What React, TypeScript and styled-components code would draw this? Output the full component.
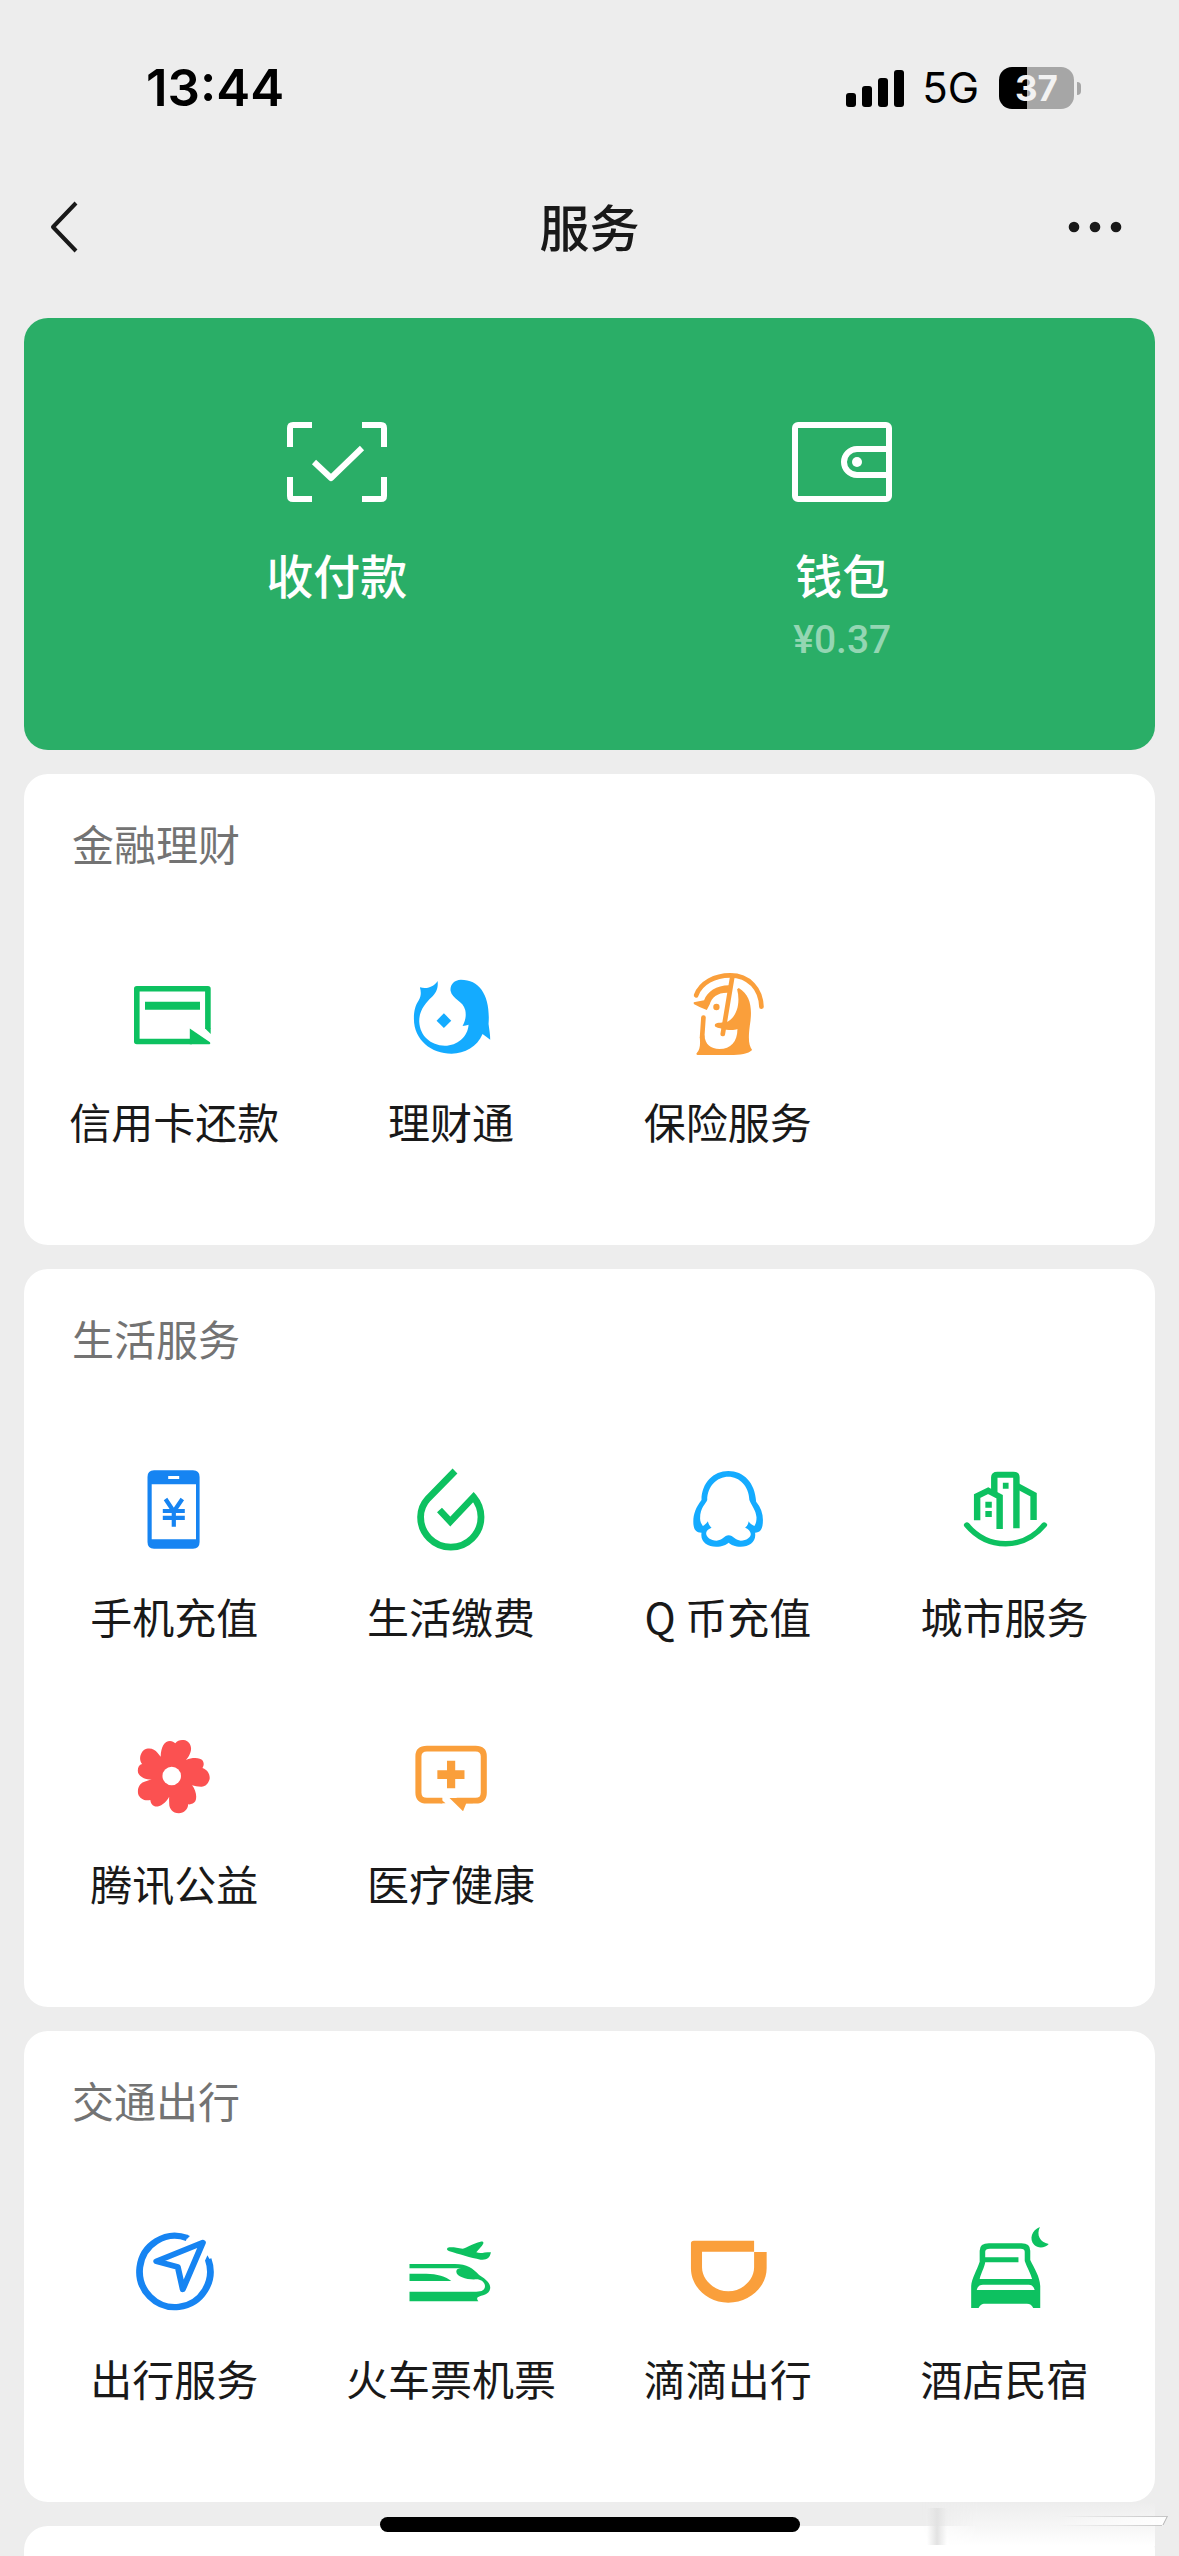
import React from "react";
import styled, { createGlobalStyle } from "styled-components";

const GlobalStyle = createGlobalStyle`
  * { box-sizing: border-box; }
  body {
    margin: 0;
    background: #ededed;
    color: #191919;
    font-family: "Noto Sans CJK SC", "Noto Sans", sans-serif;
  }
  button {
    margin: 0;
    padding: 0;
    border: 0;
    background: none;
    color: inherit;
    font: inherit;
    cursor: pointer;
  }
  h1, h2 { margin: 0; font-weight: 400; }
`;

const GREEN = "#0dc160";
const BLUE = "#1684f2";
const SKY = "#14abff";
const ORANGE = "#fa9f3b";
const RED = "#fb5151";

const Page = styled.div`
  position: relative;
  display: flex;
  flex-direction: column;
  height: 100vh;
  overflow: hidden;
`;

const StatusBar = styled.div`
  flex: none;
  display: flex;
  align-items: center;
  justify-content: space-between;
  height: 162px;
  padding: 14px 98px 0 146px;
  color: #000;
  font-family: Inter, sans-serif;
`;

const Clock = styled.time`
  font-size: 51px;
  line-height: 60px;
  font-weight: 600;
`;

const StatusGroup = styled.div`
  display: flex;
  align-items: center;
`;

const Network = styled.span`
  margin: 0 20px 0 18px;
  font-size: 42px;
  line-height: 48px;
`;

const Battery = styled.div`
  display: flex;
  align-items: center;
  gap: 3px;
`;

const BatteryBody = styled.div<{ $level: number }>`
  width: 75px;
  height: 42px;
  border-radius: 13px;
  background: linear-gradient(to right, #000 ${(p) => p.$level}%, #a6a6a6 ${(p) => p.$level}%);
  color: #f2f2f2;
  font-size: 35px;
  line-height: 42px;
  font-weight: 700;
  text-align: center;
`;

const BatteryTip = styled.div`
  width: 4px;
  height: 13px;
  border-radius: 0 4px 4px 0;
  background: #a6a6a6;
`;

const NavBar = styled.header`
  flex: none;
  display: grid;
  grid-template-columns: 1fr auto 1fr;
  align-items: center;
  height: 132px;
  padding: 0 48px 2px;
`;

const NavTitle = styled.h1`
  padding-bottom: 4px;
  font-size: 50px;
  line-height: 72px;
  font-weight: 500;
`;

const NavButton = styled.button<{ $end?: boolean }>`
  display: flex;
  justify-self: ${(p) => (p.$end ? "end" : "start")};
`;

const Content = styled.main`
  flex: 1;
  display: flex;
  flex-direction: column;
  gap: 24px;
  padding: 24px 24px 0;
`;

const PayCard = styled.section`
  flex: none;
  display: grid;
  grid-template-columns: 1fr 1fr;
  align-items: start;
  padding: 104px 60px 86px;
  border-radius: 24px;
  background: #2aae67;
  color: #fff;
`;

const PayButton = styled.button`
  display: flex;
  flex-direction: column;
  align-items: center;
`;

const PayLabel = styled.span`
  margin-top: 42px;
  font-size: 47px;
  line-height: 60px;
  font-weight: 500;
`;

const Amount = styled.span`
  margin-top: 12px;
  color: #94d6b3;
  font-family: Roboto, sans-serif;
  font-size: 39px;
  line-height: 48px;
  font-weight: 500;
`;

const Card = styled.section`
  flex: none;
  padding: 39px 12px 94px;
  border-radius: 24px;
  background: #fff;
`;

const NextCard = styled.section`
  flex: 1;
  border-radius: 24px 24px 0 0;
  background: #fff;
`;

const CardTitle = styled.h2`
  padding-left: 36px;
  color: #737373;
  font-size: 42px;
  line-height: 60px;
`;

const ServiceGrid = styled.div`
  display: grid;
  grid-template-columns: repeat(4, 1fr);
  row-gap: 89px;
  padding-top: 100px;
`;

const ServiceButton = styled.button`
  display: flex;
  flex-direction: column;
  align-items: center;
  gap: 34px;
  font-size: 42px;
  line-height: 60px;
  white-space: nowrap;
`;

const ServiceIcon = styled.svg`
  display: block;
  width: 84px;
  height: 84px;
  overflow: visible;
`;

const HomeIndicator = styled.div`
  position: absolute;
  left: 50%;
  bottom: 24px;
  width: 420px;
  height: 15px;
  border-radius: 8px;
  background: #000;
  transform: translateX(-50%);
`;

const Watermark = styled.svg`
  position: absolute;
  right: 0;
  bottom: 0;
  width: 279px;
  height: 66px;
`;

const icons: Record<string, React.ReactNode> = {
  credit: (
    <>
      <path d="M75.9 56V15.8H4.8V68.5H60" fill="none" stroke={GREEN} strokeWidth="5.6" strokeLinejoin="round" />
      <path d="M73.1 55.500H78.7V61Z" fill={GREEN} />
      <path d="M13 28.7H68V36.7H13Z" fill={GREEN} />
      <path d="M57.8 55.500L78 69.2Q79 71.3 76.5 71.3H57.8Z" fill={GREEN} />
    </>
  ),
  wealth: (
    <g transform="translate(-9.1 -13) scale(.3333)" fill={SKY}>
      <path d="M113 63C104 78 84 89 60 82C64 97 64 107 57 120C45 138 42 155 42 176C42 240 95 281 155 281C195 281 232 260 248 222C255 228 263 233 271 239C271 222 268 208 266 192C272 110 242 59 183 59C162 60 150 75 152 92C157 118 190 122 196 150C199 165 198 180 188 198Q198 197 206 194C204 230 172 257 135 257C92 256 60 227 58 185C57 152 78 128 95 112C108 99 116 85 113 63Z" />
      <path d="M132 160L154 182L132 204L110 182Z" />
    </g>
  ),
  insurance: (
    <g transform="translate(-5.9 -13) scale(.3333)" fill={ORANGE}>
      <path d="M48 106C62 68 105 46 150 46C208 46 242 88 244 140" fill="none" stroke={ORANGE} strokeWidth="14" strokeLinecap="round" />
      <path d="M157 48L128 222" fill="none" stroke={ORANGE} strokeWidth="14" strokeLinecap="round" />
      <path d="M41 127L72 121C82 94 108 77 147 76L144 98C113 97 94 112 89 133L80 150Q58 142 41 132Z" />
      <circle cx="109" cy="141" r="9.5" />
      <path d="M70 173L66 232" fill="none" stroke={ORANGE} strokeWidth="14" strokeLinecap="round" />
      <path d="M176 84C214 106 217 150 209 198C204 238 206 256 216 270C205 282 180 285 150 285H52Q47 284 50 279C60 268 61 255 59 232L73 226C75 254 92 267 118 267C152 267 172 245 172 207C160 212 140 210 125 206C112 203 104 202 104 195C106 187 122 189 138 187C170 174 182 130 171 88Z" />
    </g>
  ),
  phone: (
    <>
      <path d="M22 2.3H61Q67.6 2.3 67.6 9V74Q67.6 80.7 61 80.7H22Q15.5 80.7 15.5 74V9Q15.5 2.3 22 2.3ZM19.7 16.3V71.3H64V16.3ZM36.2 8V11H47.2V8Z" fill={BLUE} fillRule="evenodd" />
      <path d="M33.5 31L41.8 43.5L50.3 31M41.8 43V58.7M30.8 43H52.8M30.8 49.8H52.8" fill="none" stroke={BLUE} strokeWidth="4.2" />
    </>
  ),
  utility: (
    <path d="M46 3L19 30.5C14 36 11.6 42 11.6 49A30.2 30.2 0 0 0 72 49C72 42 69.500 35 64.5 29L41.3 53.5L30.5 42" fill="none" stroke={GREEN} strokeWidth="6.8" />
  ),
  qcoin: (
    <path
      transform="matrix(.3571 0 0 .3333 -85.9 -48)"
      fill={SKY}
      fillRule="evenodd"
      d="M359 153C318 153 284 188 284 240C268 262 261 282 261 305C261 328 268 338 284 338C280 365 300 380 325 380C342 380 353 375 360 368C366 375 378 380 394 380C418 380 438 366 434 338C450 338 456 325 456 300C456 280 450 262 437 245C434 188 402 153 359 153ZM359 170C328 170 300 198 300 240C296 252 280 262 280 295C280 305 283 312 288 318C295 314 300 308 302 304C303 312 307 318 312 323C305 327 298 330 297 340C297 352 310 362 326 362C342 362 348 346 360 346C372 346 380 362 394 362C410 362 422 352 422 342C421 332 415 327 406 323C412 318 415 312 416 304C419 310 425 315 432 318C437 310 438 303 438 292C436 270 425 258 418 240C417 198 390 170 359 170Z"
    />
  ),
  city: (
    <g transform="matrix(.3571 0 0 .3333 -362.6 -48)">
      <g fill="none" stroke={GREEN} strokeWidth="18">
        <path d="M1026 315C1085 390 1185 390 1243 315" strokeLinecap="round" strokeWidth="16" />
        <path d="M1055 301V228L1086 212L1118 230V327" />
        <path d="M1103 218V172Q1103 164 1112 164H1156Q1165 164 1165 172V325" />
        <path d="M1168 198L1213 224V300" />
      </g>
      <path d="M1127 188h16v18h-16zM1078 245h18v18h-18zM1078 273h18v18h-18z" fill={GREEN} />
    </g>
  ),
  charity: (
    <g transform="matrix(.3571 0 0 .3333 -102.4 -55)">
      <path
        fill={RED}
        d="M367 230C368 200 378 183 393 183C400 183 404 186 408 190C415 180 425 178 436 181C452 188 455 205 450 218C447 228 442 234 438 240C455 232 478 232 485 242C489 250 488 258 484 264C500 270 506 285 504 298C500 312 492 321 480 320C470 320 462 318 455 316C465 330 470 350 464 364C460 371 452 374 444 373C444 388 432 400 418 400C400 400 391 385 391 372C391 365 390 358 391 350C380 372 362 382 350 379C342 376 339 368 338 360C322 364 308 356 304 342C301 325 308 312 318 307C325 303 334 300 342 299C320 298 303 288 303 272C303 262 307 254 315 252C306 240 308 222 320 210C335 201 350 207 358 218Z"
      />
      <ellipse cx="398" cy="288" rx="26" ry="28" fill="#fff" />
    </g>
  ),
  medical: (
    <g transform="matrix(.3571 0 0 .3333 -379.1 -55)">
      <path d="M1155 362H1112Q1088 362 1088 338V229Q1088 206 1112 206H1248Q1271 206 1271 229V338Q1271 362 1248 362H1195" fill="none" stroke={ORANGE} strokeWidth="17" />
      <path d="M1146 354L1164 370H1150ZM1175 354H1240V370H1222L1213 394ZM1141 271H1168V242H1191V271H1217V297H1191V325H1168V297H1141Z" fill={ORANGE} />
    </g>
  ),
  travel: (
    <g transform="matrix(.3571 0 0 .3333 -102.4 -50)" fill="none" stroke={BLUE}>
      <path d="M441 174A99 107 0 1 0 500 238" strokeWidth="19" />
      <path d="M441 164L449 168L440 178ZM498 226L508 245L492 240Z" fill={BLUE} stroke="none" />
      <path d="M485 188L355 244L415 261L429 328Z" strokeWidth="17" strokeLinejoin="round" />
    </g>
  ),
  train: (
    <g transform="matrix(.3571 0 0 .3333 -379.1 -50)" fill={GREEN}>
      <path d="M1170 203C1180 200 1195 203 1212 206C1224 203 1240 190 1262 185C1272 184 1272 190 1266 197L1250 217C1262 222 1270 217 1291 217C1288 235 1278 241 1262 239C1235 234 1200 222 1175 214C1168 211 1166 207 1170 203Z" />
      <path d="M1063 252H1190C1225 252 1240 265 1258 285C1280 300 1290 310 1289 325C1287 345 1265 345 1254 352Q1250 357 1256 364H1063V335H1250C1268 335 1276 328 1274 315C1272 305 1262 298 1250 298C1225 300 1195 290 1194 275C1194 268 1200 265 1208 265H1063Z" />
      <path d="M1063 281H1110C1140 281 1165 290 1180 303H1063Z" />
    </g>
  ),
  ride: (
    <path
      transform="matrix(.3693 0 0 .3333 -85.9 -50)"
      fill={ORANGE}
      d="M246 190Q246 182 254 182H417V215H276V262C276 300 310 334 347 334C385 334 417 300 417 262V216H451V265C451 320 405 368 347 368C290 368 246 320 246 265Z"
    />
  ),
  hotel: (
    <g transform="matrix(.3693 0 0 .3333 -362.6 -50)" fill={GREEN} fillRule="evenodd">
      <path d="M1190 141C1180 165 1190 187 1214 192C1205 204 1185 206 1175 195C1160 178 1168 150 1190 141Z" />
      <path d="M1004 384V318C1005 295 1020 270 1027 245V212Q1027 190 1052 190H1140Q1164 190 1164 212V240C1175 265 1190 290 1191 318V384H1172Q1167 371 1155 371H1038Q1028 373 1024 384ZM1042 232H1132V247H1042C1040 262 1030 282 1027 297H1169C1165 280 1155 262 1149 243V215Q1149 206 1138 206H1055Q1042 206 1042 215ZM1019 330Q1022 314 1036 314H1160Q1172 314 1176 330Z" />
    </g>
  ),
};

interface Service {
  icon: string;
  label: string;
}

const sections: { title: string; services: Service[] }[] = [
  {
    title: "金融理财",
    services: [
      { icon: "credit", label: "信用卡还款" },
      { icon: "wealth", label: "理财通" },
      { icon: "insurance", label: "保险服务" },
    ],
  },
  {
    title: "生活服务",
    services: [
      { icon: "phone", label: "手机充值" },
      { icon: "utility", label: "生活缴费" },
      { icon: "qcoin", label: "Q 币充值" },
      { icon: "city", label: "城市服务" },
      { icon: "charity", label: "腾讯公益" },
      { icon: "medical", label: "医疗健康" },
    ],
  },
  {
    title: "交通出行",
    services: [
      { icon: "travel", label: "出行服务" },
      { icon: "train", label: "火车票机票" },
      { icon: "ride", label: "滴滴出行" },
      { icon: "hotel", label: "酒店民宿" },
    ],
  },
];

function SignalIcon() {
  return (
    <svg width="58" height="38" viewBox="0 0 58 38" aria-hidden="true">
      <rect x="0" y="24" width="10" height="14" rx="3" />
      <rect x="16" y="17" width="10" height="21" rx="3" />
      <rect x="32" y="9" width="10" height="29" rx="3" />
      <rect x="48" y="1" width="10" height="37" rx="3" />
    </svg>
  );
}

function WatermarkTrace() {
  return (
    <Watermark viewBox="0 0 279 66" aria-hidden="true">
      <defs>
        <linearGradient id="haze" x1="0" y1="0" x2="0" y2="1">
          <stop offset="0" stopColor="#ededed" />
          <stop offset="0.6" stopColor="#f7f7f7" />
          <stop offset="1" stopColor="#fff" />
        </linearGradient>
        <linearGradient id="fade" x1="0" y1="0" x2="1" y2="0">
          <stop offset="0" stopColor="#fff" stopOpacity="0" />
          <stop offset="0.25" stopColor="#fff" />
          <stop offset="1" stopColor="#fff" />
        </linearGradient>
        <linearGradient id="bar" x1="0" y1="0" x2="1" y2="0">
          <stop offset="0" stopColor="#e2e2e2" stopOpacity="0" />
          <stop offset="0.5" stopColor="#e2e2e2" />
          <stop offset="1" stopColor="#e2e2e2" stopOpacity="0" />
        </linearGradient>
        <linearGradient id="streak" x1="0" y1="0" x2="1" y2="0">
          <stop offset="0" stopColor="#fff" stopOpacity="0" />
          <stop offset="1" stopColor="#fff" />
        </linearGradient>
        <linearGradient id="edge" x1="0" y1="0" x2="1" y2="0">
          <stop offset="0" stopColor="#c4c4c4" stopOpacity="0" />
          <stop offset="1" stopColor="#c4c4c4" />
        </linearGradient>
        <mask id="hazeMask">
          <rect x="20" y="12" width="235" height="44" fill="url(#fade)" />
        </mask>
      </defs>
      <rect x="20" y="12" width="235" height="44" fill="url(#haze)" mask="url(#hazeMask)" />
      <rect x="27" y="18" width="20" height="37" fill="url(#bar)" />
      <path d="M160 27H267L262 36H160Z" fill="url(#streak)" />
      <path d="M160 26H268V27H160ZM160 35H262V36H160Z" fill="url(#edge)" />
      <path d="M267 27L263 35" stroke="#b4b4b4" strokeWidth="1" />
    </Watermark>
  );
}

export default function App() {
  return (
    <>
      <GlobalStyle />
      <Page>
        <StatusBar>
          <Clock>13:44</Clock>
          <StatusGroup>
            <SignalIcon />
            <Network>5G</Network>
            <Battery>
              <BatteryBody $level={37}>37</BatteryBody>
              <BatteryTip />
            </Battery>
          </StatusGroup>
        </StatusBar>
        <NavBar>
          <NavButton aria-label="返回">
            <svg width="32" height="56" viewBox="0 0 32 56" fill="none" stroke="#191919" strokeWidth="4">
              <path d="M28 4L5 28L28 52" strokeLinejoin="round" />
            </svg>
          </NavButton>
          <NavTitle>服务</NavTitle>
          <NavButton aria-label="更多" $end>
            <svg width="72" height="56" viewBox="0 0 72 56" fill="#191919">
              <circle cx="15" cy="28" r="5.3" />
              <circle cx="36" cy="28" r="5.3" />
              <circle cx="57" cy="28" r="5.3" />
            </svg>
          </NavButton>
        </NavBar>
        <Content>
          <PayCard>
            <PayButton>
              <svg width="100" height="80" viewBox="0 0 100 80" fill="none" stroke="#fff" strokeWidth="6">
                <path d="M3 25V6Q3 3 6 3H25M75 3H94Q97 3 97 6V25M97 55V74Q97 77 94 77H75M25 77H6Q3 77 3 74V55" />
                <path d="M27 40L44 56L75 26" strokeLinejoin="round" />
              </svg>
              <PayLabel>收付款</PayLabel>
            </PayButton>
            <PayButton>
              <svg width="100" height="80" viewBox="0 0 100 80" fill="none" stroke="#fff" strokeWidth="6">
                <rect x="3" y="3" width="94" height="74" rx="3" />
                <path d="M97 27H65A13 13 0 0 0 65 53H97" />
                <circle cx="65" cy="40" r="5" fill="#fff" stroke="none" />
              </svg>
              <PayLabel>钱包</PayLabel>
              <Amount>¥0.37</Amount>
            </PayButton>
          </PayCard>
          {sections.map((section) => (
            <Card key={section.title}>
              <CardTitle>{section.title}</CardTitle>
              <ServiceGrid>
                {section.services.map((service) => (
                  <ServiceButton key={service.label}>
                    <ServiceIcon viewBox="0 0 84 84" aria-hidden="true">
                      {icons[service.icon]}
                    </ServiceIcon>
                    {service.label}
                  </ServiceButton>
                ))}
              </ServiceGrid>
            </Card>
          ))}
          <NextCard />
        </Content>
        <WatermarkTrace />
        <HomeIndicator />
      </Page>
    </>
  );
}
